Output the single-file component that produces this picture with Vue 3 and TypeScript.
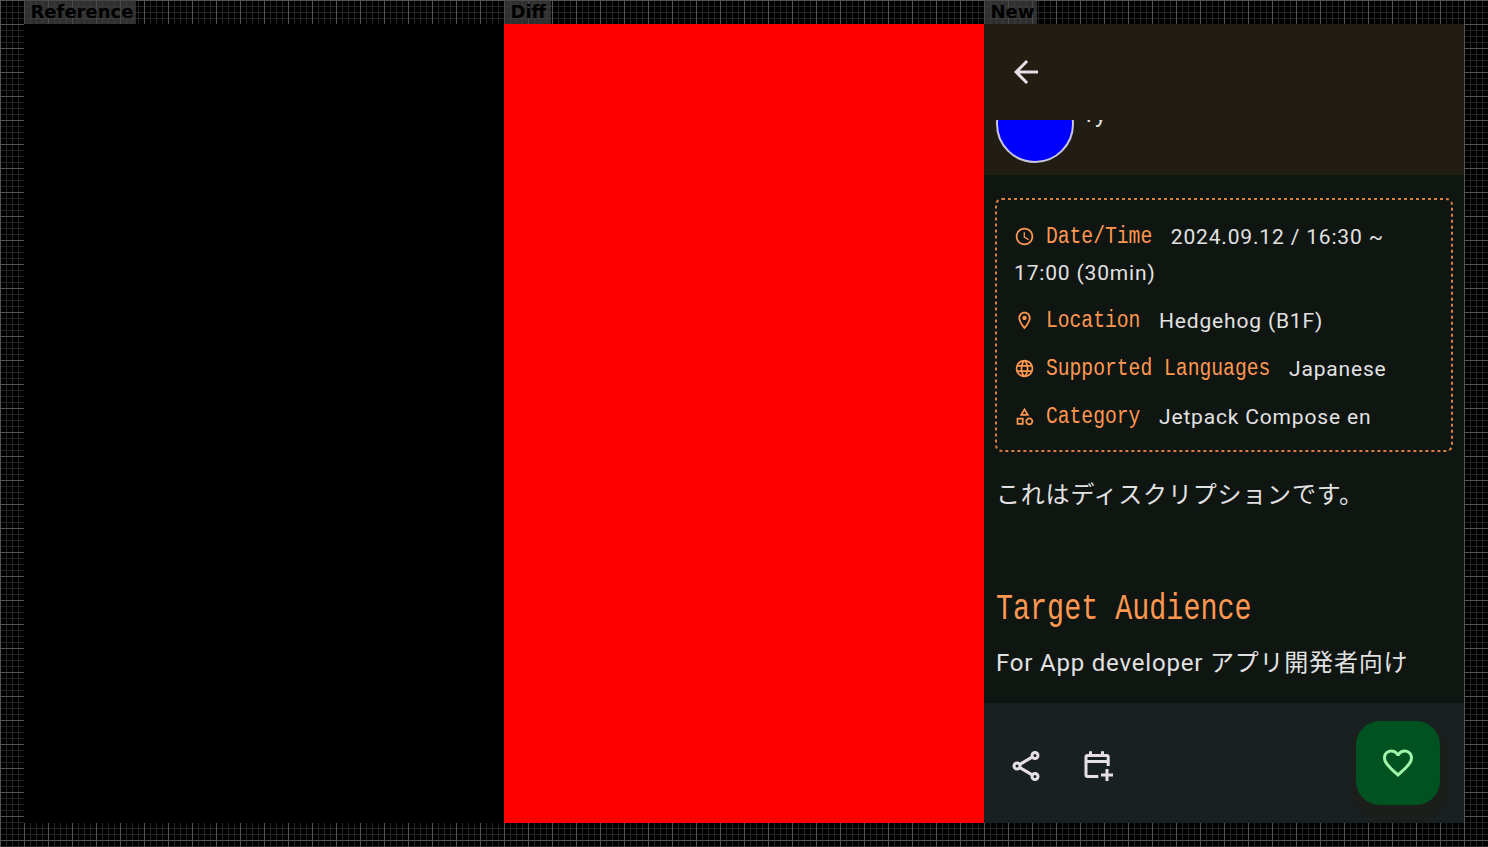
<script setup lang="ts">
interface InfoRow {
  icon: 'clock' | 'pin' | 'globe' | 'category'
  label: string
  value: string
}

const rows: InfoRow[] = [
  { icon: 'clock', label: 'Date/Time', value: '2024.09.12 / 16:30 ~ 17:00 (30min)' },
  { icon: 'pin', label: 'Location', value: 'Hedgehog (B1F)' },
  { icon: 'globe', label: 'Supported Languages', value: 'Japanese' },
  { icon: 'category', label: 'Category', value: 'Jetpack Compose en' },
]

const iconPaths: Record<InfoRow['icon'], string> = {
  clock:
    'M11.99 2C6.47 2 2 6.48 2 12s4.47 10 9.99 10C17.52 22 22 17.52 22 12S17.52 2 11.99 2zM12 20c-4.42 0-8-3.58-8-8s3.58-8 8-8 8 3.58 8 8-3.58 8-8 8zm.5-13H11v6l5.25 3.15.75-1.23-4.5-2.67z',
  pin: 'M12 2C8.13 2 5 5.13 5 9c0 5.25 7 13 7 13s7-7.75 7-13c0-3.87-3.13-7-7-7zM7 9c0-2.76 2.24-5 5-5s5 2.24 5 5c0 2.88-2.88 7.19-5 9.88C9.92 16.21 7 11.85 7 9zM12 6.5a2.5 2.5 0 1 0 0 5 2.5 2.5 0 0 0 0-5z',
  globe:
    'M11.99 2C6.47 2 2 6.48 2 12s4.47 10 9.99 10C17.52 22 22 17.52 22 12S17.52 2 11.99 2zm6.93 6h-2.95c-.32-1.25-.78-2.45-1.38-3.56 1.84.63 3.37 1.91 4.33 3.56zM12 4.04c.83 1.2 1.48 2.53 1.91 3.96h-3.82c.43-1.43 1.08-2.76 1.91-3.96zM4.26 14C4.1 13.36 4 12.69 4 12s.1-1.36.26-2h3.38c-.08.66-.14 1.32-.14 2s.06 1.34.14 2H4.26zm.82 2h2.95c.32 1.25.78 2.45 1.38 3.56-1.84-.63-3.37-1.9-4.33-3.56zm2.95-8H5.08c.96-1.66 2.49-2.93 4.33-3.56C8.81 5.55 8.35 6.75 8.03 8zM12 19.96c-.83-1.2-1.48-2.53-1.91-3.96h3.82c-.43 1.43-1.08 2.76-1.91 3.96zM14.34 14H9.66c-.09-.66-.16-1.32-.16-2s.07-1.35.16-2h4.68c.09.65.16 1.32.16 2s-.07 1.34-.16 2zm.25 5.56c.6-1.11 1.06-2.31 1.38-3.56h2.95c-.96 1.65-2.49 2.93-4.33 3.56zM16.36 14c.08-.66.14-1.32.14-2s-.06-1.34-.14-2h3.38c.16.64.26 1.31.26 2s-.1 1.36-.26 2h-3.38z',
  category:
    'M12 2l-5.5 9h11L12 2zm0 3.84L13.93 9h-3.87L12 5.84zM17.5 13c-2.49 0-4.5 2.01-4.5 4.5s2.01 4.5 4.5 4.5 4.5-2.01 4.5-4.5-2.01-4.5-4.5-4.5zm0 7a2.5 2.5 0 0 1 0-5 2.5 2.5 0 0 1 0 5zM3 21.5h8v-8H3v8zm2-6h4v4H5v-4z',
}
</script>

<template>
  <main class="board">
    <section class="column">
      <h2 class="tag tag-reference">Reference</h2>
      <div class="pane"></div>
    </section>
    <section class="column">
      <h2 class="tag tag-diff">Diff</h2>
      <div class="pane pane-diff"></div>
    </section>
    <section class="column">
      <h2 class="tag tag-new">New</h2>
      <div class="pane phone">
        <header class="top-bar">
          <svg class="icon" viewBox="0 0 24 24">
            <path d="M20 11H7.83l5.59-5.59L12 4l-8 8 8 8 1.41-1.41L7.83 13H20v-2z" />
          </svg>
        </header>
        <div class="speaker">
          <span class="avatar"></span>
          <span class="speaker-name">ry</span>
        </div>
        <div class="content">
          <div class="info">
            <svg class="outline" viewBox="0 0 458 254">
              <rect x="1" y="1" width="456" height="252" rx="6" />
            </svg>
            <p v-for="row in rows" :key="row.icon" class="row">
              <svg class="row-icon" viewBox="0 0 24 24"><path fill-rule="evenodd" :d="iconPaths[row.icon]" /></svg>
              <span class="label">{{ row.label }}</span>
              <span class="value">{{ row.value }}</span>
            </p>
          </div>
          <p class="description">これはディスクリプションです。</p>
          <h3 class="heading"><span>Target Audience</span></h3>
          <p class="audience">For App developer アプリ開発者向け</p>
        </div>
        <footer class="bottom-bar">
          <svg class="icon" viewBox="0 0 24 24">
            <g class="stroked">
              <circle cx="18" cy="5" r="2" />
              <circle cx="6" cy="12" r="2" />
              <circle cx="18" cy="19" r="2" />
              <path d="M7.9 10.9l8.2-4.8M7.9 13.1l8.2 4.8" />
            </g>
          </svg>
          <svg class="icon" viewBox="0 0 24 24">
            <g class="stroked">
              <path d="M12.2 19H5a1 1 0 0 1-1-1V6a1 1 0 0 1 1-1h12.8a1 1 0 0 1 1 1v6M4 9h14.8M7 2.1V5M15 2.1V5M18 14v8M14 18h8" />
            </g>
          </svg>
          <button class="fab" type="button" aria-label="Favorite">
            <svg class="icon heart" viewBox="0 0 24 24">
              <path d="M16.5 3c-1.74 0-3.41.81-4.5 2.09C10.91 3.81 9.24 3 7.5 3 4.42 3 2 5.42 2 8.5c0 3.78 3.4 6.86 8.55 11.54L12 21.35l1.45-1.32C18.6 15.36 22 12.28 22 8.5 22 5.42 19.58 3 16.5 3zm-4.4 15.55l-.1.1-.1-.1C7.14 14.24 4 11.39 4 8.5 4 6.5 5.5 5 7.5 5c1.54 0 3.04.99 3.57 2.36h1.87C13.46 5.99 14.96 5 16.5 5c2 0 3.5 1.5 3.5 3.5 0 2.89-3.14 5.74-7.9 10.05z" />
            </svg>
          </button>
        </footer>
      </div>
    </section>
  </main>
</template>

<style>
body {
  margin: 0;
  background: #000;
}
</style>

<style scoped>
.board {
  box-sizing: border-box;
  width: 1488px;
  height: 847px;
  padding: 0 24px;
  overflow: hidden;
  display: flex;
  background:
    repeating-linear-gradient(90deg, #555 0 1px, transparent 1px 24px),
    repeating-linear-gradient(180deg, #555 0 1px, transparent 1px 24px),
    repeating-linear-gradient(90deg, #242424 0 1px, transparent 1px 6px),
    repeating-linear-gradient(180deg, #242424 0 1px, transparent 1px 6px),
    #000;
}
.column {
  width: 480px;
}
.tag {
  box-sizing: border-box;
  height: 24px;
  margin: 0;
  padding-left: 6.5px;
  background: rgba(68, 68, 68, 0.7);
  color: #000;
  font: bold 18px/23px "DejaVu Sans", sans-serif;
}
.tag-reference {
  width: 112px;
}
.tag-diff {
  width: 47px;
}
.tag-new {
  width: 53px;
}
.pane {
  height: 799px;
  background: #000;
}
.pane-diff {
  background: #f00;
}
.phone {
  display: flex;
  flex-direction: column;
  background: #0f1511;
  color: #e2e2e2;
  font-family: Roboto, "Noto Sans CJK JP", sans-serif;
}
.icon {
  display: block;
  width: 36px;
  height: 36px;
  fill: #e6e0e5;
}
.top-bar {
  height: 96px;
  box-sizing: border-box;
  padding: 30px 24px;
  background: #211d12;
}
.speaker {
  height: 55px;
  padding-left: 12px;
  display: flex;
  gap: 12px;
  overflow: hidden;
  background: #211d12;
}
.avatar {
  box-sizing: border-box;
  width: 78px;
  height: 78px;
  margin-top: -35px;
  border: 2px solid #c9c6dc;
  border-radius: 50%;
  background: #00f;
}
.speaker-name {
  margin-top: -20px;
  font-size: 24px;
  line-height: 28px;
  letter-spacing: 0.75px;
}
.content {
  height: 528px;
  box-sizing: border-box;
  padding: 23px 11px 0;
}
.info {
  position: relative;
  box-sizing: border-box;
  height: 254px;
  padding: 21px 19px;
}
.outline {
  position: absolute;
  inset: 0;
  width: 458px;
  height: 254px;
  fill: none;
  stroke: #d98043;
  stroke-width: 2;
  stroke-dasharray: 3 3;
}
.row {
  margin: 0 0 12px;
  font-size: 21px;
  line-height: 36px;
  letter-spacing: 0.83px;
}
.row-icon {
  width: 21px;
  height: 21px;
  margin-right: 10.9px;
  vertical-align: -3px;
  fill: #ff9850;
}
.label {
  display: inline-block;
  height: 36px;
  margin-right: 18.6px;
  vertical-align: top;
  color: #ff9850;
  font: 19.7px/36px "Liberation Mono", monospace;
  letter-spacing: 0;
  transform: scaleY(1.25);
}
.description,
.audience {
  margin: 0 1px;
  font-size: 24px;
  line-height: 36px;
  letter-spacing: 0.8px;
  white-space: nowrap;
}
.description {
  margin-top: 25px;
}
.heading {
  margin: 78px 1px 0;
  height: 42px;
  color: #ff9850;
  font: 28.4px/42px "Liberation Mono", monospace;
}
.heading span {
  display: inline-block;
  transform: translateY(-2px) scaleY(1.3);
}
.audience {
  margin-top: 12px;
}
.bottom-bar {
  position: relative;
  height: 120px;
  box-sizing: border-box;
  padding: 18px 24px;
  display: flex;
  background: #192022;
}
.bottom-bar > .icon {
  margin: 27px 36px 0 0;
}
.stroked {
  fill: none;
  stroke: #e6e0e5;
  stroke-width: 2;
}
.fab {
  position: relative;
  width: 84px;
  height: 84px;
  margin-left: auto;
  padding: 0;
  border: 0;
  border-radius: 24px;
  display: flex;
  align-items: center;
  justify-content: center;
  background: #005320;
  box-shadow: 2px 8px 0 8px #1c1e1c;
}
.heart {
  fill: #9df6a9;
}
</style>
